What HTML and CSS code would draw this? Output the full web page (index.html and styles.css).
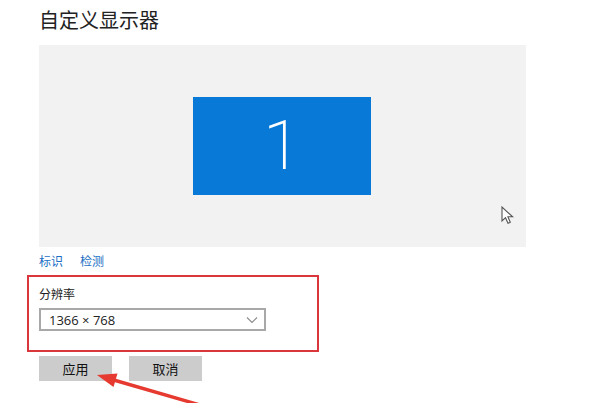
FILE: index.html
```html
<!DOCTYPE html>
<html lang="zh-CN">

<head>
    <meta charset="UTF-8">
    <meta name="viewport" content="width=device-width, initial-scale=1.0">
    <title>自定义显示器</title>
    <link rel="stylesheet" href="styles.css">
</head>

<body>
    <div class="page">
        <h1 class="title">自定义显示器</h1>

        <div class="preview">
            <div class="monitor">1</div>
            <svg class="cursor" width="14" height="19" viewBox="0 0 14 19">
                <path d="M1 1 L1 15 L4.5 11.7 L7 17.3 L9.3 16.3 L6.9 10.8 L11.6 10.8 Z" fill="#fff" stroke="#555" stroke-width="1.1" stroke-linejoin="miter"/>
            </svg>
        </div>

        <div class="links">
            <a href="#">标识</a>
            <a href="#">检测</a>
        </div>

        <div class="highlight">
            <div class="label">分辨率</div>
            <div class="select">
                <span>1366 × 768</span>
                <svg width="12" height="8" viewBox="0 0 12 8">
                    <path d="M1 1.5 L6 6.5 L11 1.5" fill="none" stroke="#8a8a8a" stroke-width="1.1"/>
                </svg>
            </div>
        </div>

        <div class="buttons">
            <button>应用</button>
            <button>取消</button>
        </div>
    </div>

    <!-- 标注箭头 -->
    <svg class="arrow" width="604" height="403" viewBox="0 0 604 403">
        <line x1="200" y1="405" x2="112" y2="379.5" stroke="#e63a30" stroke-width="3.4"/>
        <polygon points="97,375 117.5,373.5 113.5,387" fill="#e63a30"/>
    </svg>
</body>

</html>
```

FILE: styles.css
```css
/* 自定义显示器设置 */
body {
    margin: 0;
    background: #fff;
    font-family: "Noto Sans CJK SC", "Noto Sans", sans-serif;
    color: #1f1f1f;
}
.page {
    padding-left: 39px;
    display: flex;
    flex-direction: column;
    align-items: flex-start;
}
.title {
    margin: 0;
    padding-top: 7px;
    font-size: 20px;
    font-weight: 400;
    line-height: 26px;
    color: #222;
}
.preview {
    position: relative;
    margin-top: 12px;
    width: 487px;
    height: 202px;
    background: #f2f2f2;
    display: flex;
    align-items: center;
    justify-content: center;
}
.monitor {
    width: 178px;
    height: 98px;
    background: #0879d6;
    color: #fff;
    font-family: Roboto, "Noto Sans", sans-serif;
    font-weight: 200;
    font-size: 69px;
    line-height: 98px;
    text-align: center;
    margin-left: -1px;
}
.cursor {
    position: absolute;
    left: 462px;
    top: 161px;
}
.links {
    margin-top: 6px;
    display: flex;
    gap: 17px;
    font-size: 12px;
    line-height: 16px;
}
.links a {
    color: #1a6fc4;
    text-decoration: none;
}
.highlight {
    margin-top: 6px;
    margin-left: -12px;
    width: 268px;
    border: 2px solid #d9373b;
    padding: 9px 10px 19px 10px;
}
.label {
    font-size: 12px;
    line-height: 16px;
    color: #222;
}
.select {
    margin-top: 6px;
    width: 223px;
    height: 19px;
    border: 2px solid #a8a8a8;
    display: flex;
    align-items: center;
    justify-content: space-between;
    background: #fff;
}
.select span {
    padding-left: 8px;
    font-family: "Open Sans", "Noto Sans", sans-serif;
    font-size: 13px;
    color: #222;
}
.select svg {
    margin-right: 6px;
}
.buttons {
    margin-top: 4px;
    display: flex;
    gap: 17px;
}
button {
    width: 73px;
    height: 25px;
    border: none;
    padding: 0;
    background: #cccccc;
    font-family: "Noto Sans CJK SC", sans-serif;
    font-size: 13px;
    color: #111;
}
.arrow {
    position: absolute;
    left: 0;
    top: 0;
    pointer-events: none;
}
```
